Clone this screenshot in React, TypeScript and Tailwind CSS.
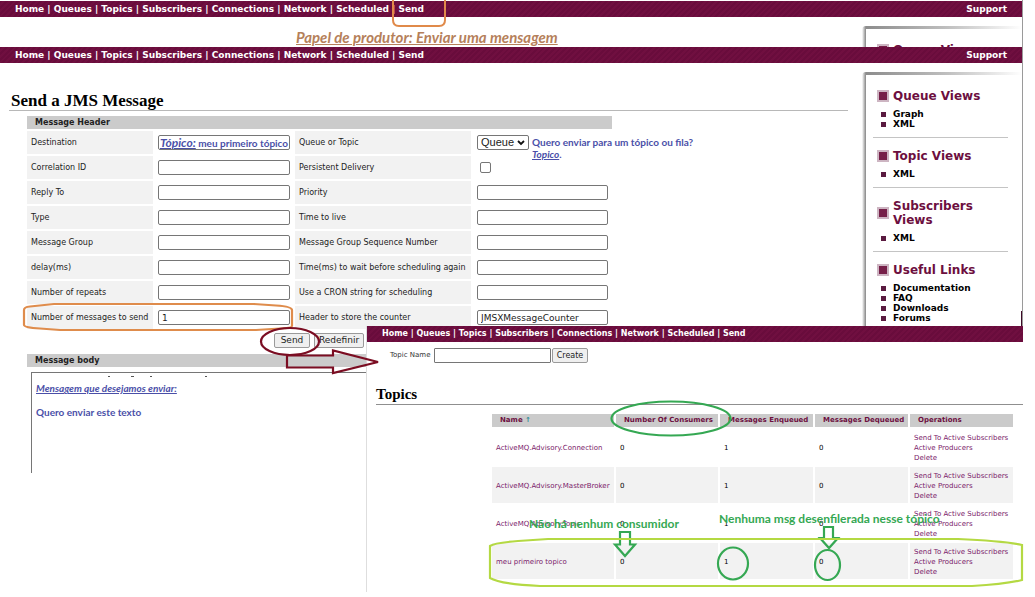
import React from "react";

const navItems = ["Home", "Queues", "Topics", "Subscribers", "Connections", "Network", "Scheduled", "Send"];

const stripes =
  "bg-[#6d0f3f] bg-[repeating-linear-gradient(135deg,#690c3c_0px,#690c3c_2px,#700f40_2px,#700f40_4px)]";

function NavBar({ small = false, support = true }: { small?: boolean; support?: boolean }) {
  return (
    <nav
      className={`flex h-4 shrink-0 items-center justify-between pl-[15px] font-bold text-white ${stripes} ${
        small ? "text-[8px]" : "pr-[15px] text-[9px]"
      }`}
    >
      <div className="whitespace-pre leading-4">
        {navItems.map((item, i) => (
          <React.Fragment key={item}>
            {i > 0 && " | "}
            <a href="#">{item}</a>
          </React.Fragment>
        ))}
      </div>
      {support && (
        <a href="#" className="leading-4">
          Support
        </a>
      )}
    </nav>
  );
}

const views = [
  { title: "Queue Views", links: ["Graph", "XML"] },
  { title: "Topic Views", links: ["XML"] },
  { title: "Subscribers Views", links: ["XML"] },
  { title: "Useful Links", links: ["Documentation", "FAQ", "Downloads", "Forums"] },
];

function Sidebar({ sections }: { sections: typeof views }) {
  return (
    <div className="flex w-[160px] shrink-0">
      <div className="w-[4px] rounded-tl-md bg-linear-to-r from-white to-[#858585]" />
      <aside className="min-w-0 flex-1">
        <div className="h-[3px] bg-linear-to-r from-[#8d8d8d] via-[#bdbdbd] to-white" />
        <div className="rounded-tl-sm bg-white pl-[7px] pr-[14px] pt-[11px]">
          {sections.map((s, i) => (
            <section
              key={s.title}
              className={`pl-1 pt-[3px] ${i < sections.length - 1 ? "mb-2 border-b border-[#c4c4c4] pb-2" : ""}`}
            >
              <h2 className="flex items-center gap-1 text-[12px] font-bold leading-[14px] text-[#6d0f3f]">
                <span className="size-3 shrink-0 border-2 border-[#cdb5c2] bg-[#762049]" />
                {s.title}
              </h2>
              <ul className="mt-[6px] pl-1 text-[9px] font-bold leading-[10px] text-black">
                {s.links.map((l) => (
                  <li key={l} className="flex items-center gap-[7px]">
                    <span className="size-[5px] bg-[#5a1a40]" />
                    <a href="#">{l}</a>
                  </li>
                ))}
              </ul>
            </section>
          ))}
        </div>
      </aside>
    </div>
  );
}

const leftFields = ["Destination", "Correlation ID", "Reply To", "Type", "Message Group", "delay(ms)", "Number of repeats", "Number of messages to send"];
const rightFields = [
  "Queue or Topic",
  "Persistent Delivery",
  "Priority",
  "Time to live",
  "Message Group Sequence Number",
  "Time(ms) to wait before scheduling again",
  "Use a CRON string for scheduling",
  "Header to store the counter",
];

const field = "block h-[15px] rounded-[2px] border border-[#767676] bg-white px-[3px] text-[9px] text-[#222]";
const note = "font-[Lato,sans-serif] font-bold text-[#4a4fa8]";
const button = "h-[15px] rounded-[2px] border border-[#9a9a9a] bg-[#efefef] leading-[13px] text-[#222]";

function RightControl({ row }: { row: number }) {
  const id = `right-${row}`;
  if (row === 0)
    return (
      <div className="relative">
        <select
          id={id}
          className="block h-[15px] w-[52px] appearance-none rounded-[2px] border border-[#767676] bg-white pl-[3px] font-['Liberation_Sans',sans-serif] text-[11px] leading-[13px] text-[#222]"
        >
          <option>Queue</option>
          <option>Topic</option>
        </select>
        <svg className="pointer-events-none absolute left-[40px] top-[5px]" width="8" height="6" viewBox="0 0 8 6">
          <path d="M1 1l3 3 3-3" fill="none" stroke="#111" strokeWidth="1.8" />
        </svg>
        <p className={`absolute left-[55px] top-px w-44 text-[10px] leading-3 ${note}`}>
          Quero enviar para um tópico ou fila?
          <br />
          <em className="underline">Topico</em>.
        </p>
      </div>
    );
  if (row === 1)
    return <input id={id} type="checkbox" className="ml-[3px] block size-[11px] appearance-none rounded-[2px] border border-[#767676]" />;
  return <input id={id} className={`${field} w-[131px]`} defaultValue={row === 7 ? "JMSXMessageCounter" : ""} />;
}

function MessageForm() {
  return (
    <form className="pl-[27px]" onSubmit={(e) => e.preventDefault()}>
      <h2 className="h-[13px] w-[585px] bg-[#cbcbcb] pl-2 text-[8px] font-bold leading-[13px] text-[#222]">Message Header</h2>
      <div className="mt-[2px] grid grid-cols-[126px_138px_176px_140px] gap-[2px] text-[8px] text-[#222]">
        {leftFields.map((label, i) => (
          <React.Fragment key={label}>
            <label htmlFor={`left-${i}`} className="flex h-[23px] items-center whitespace-nowrap bg-[#f2f2f2] pl-1">
              {label}
            </label>
            <div className="flex items-center pl-[3px]">
              {i === 0 ? (
                <div className="relative">
                  <input id="left-0" className={`${field} w-[132px]`} />
                  <span className={`pointer-events-none absolute left-[2px] top-0 whitespace-nowrap text-[10px] leading-4 ${note}`}>
                    <em className="text-[12px] underline">Tópico:</em> meu primeiro tópico
                  </span>
                </div>
              ) : (
                <input id={`left-${i}`} className={`${field} w-[132px]`} defaultValue={i === 7 ? "1" : ""} />
              )}
            </div>
            <label htmlFor={`right-${i}`} className="flex h-[23px] items-center whitespace-nowrap bg-[#f2f2f2] pl-1">
              {rightFields[i]}
            </label>
            <div className="flex items-center pl-1">
              <RightControl row={i} />
            </div>
          </React.Fragment>
        ))}
      </div>
      <div className="flex gap-1 pl-[247px] pt-1">
        <button className={`${button} w-9 text-[9px]`}>Send</button>
        <button type="reset" className={`${button} w-[50px] text-[9px]`}>
          Redefinir
        </button>
      </div>
      <h2 className="mt-[6px] h-[13px] w-[585px] bg-[#cbcbcb] pl-2 text-[8px] font-bold leading-[13px] text-[#222]">
        <label htmlFor="body">Message body</label>
      </h2>
      <div className="relative ml-1 mt-[5px] w-[581px]">
        <textarea id="body" className="block h-[101px] w-full resize-none border-l border-t border-[#767676]" />
        <div className={`pointer-events-none absolute left-[5px] top-2 text-[10px] leading-4 ${note}`}>
          <p>
            <em className="underline">Mensagem que desejamos enviar:</em>
          </p>
          <p className="mt-2">Quero enviar este texto</p>
        </div>
      </div>
    </form>
  );
}

const topicNames = ["ActiveMQ.Advisory.Connection", "ActiveMQ.Advisory.MasterBroker", "ActiveMQ.Advisory.Topic", "meu primeiro topico"];
const columns = ["Name", "Number Of Consumers", "Messages Enqueued", "Messages Dequeued", "Operations"];

function TopicsWindow() {
  return (
    <div className="absolute left-[366px] right-3 top-[326px] h-[266px] border-l border-[#dedede] bg-white">
      <NavBar small support={false} />
      <form className="flex h-[26px] items-center pl-[23px]" onSubmit={(e) => e.preventDefault()}>
        <label htmlFor="topic" className="w-11 text-[7px] text-[#333]">
          Topic Name
        </label>
        <input id="topic" className="h-[15px] w-[117px] rounded-[1px] border border-[#767676] text-[9px]" />
        <button className={`${button} ml-px w-9 text-[8px]`}>Create</button>
      </form>
      <h1 className="ml-[9px] mt-4 border-b border-[#8f8f8f] font-['Liberation_Serif',serif] text-[15px] font-bold leading-5">
        Topics
      </h1>
      <table className="ml-[123px] mt-[7px] w-[525px] table-fixed border-separate border-spacing-[2px] text-left text-[7px]">
        <colgroup>
          <col className="w-[122px]" />
          <col className="w-[102px]" />
          <col className="w-[93px]" />
          <col className="w-[93px]" />
          <col />
        </colgroup>
        <thead>
          <tr className="h-[13px] text-[#6d0f3f]">
            {columns.map((h, i) => (
              <th key={h} className="whitespace-nowrap bg-[#cbcbcb] p-0 pl-2 font-bold leading-[13px]">
                {h}
                {i === 0 && <span className="text-[#2d8a96]"> ↑</span>}
              </th>
            ))}
          </tr>
        </thead>
        <tbody>
          {topicNames.map((name, i) => (
            <tr key={name} className={`h-9 ${i % 2 ? "bg-[#f2f2f2]" : ""}`}>
              <td className="whitespace-nowrap p-0 pl-1 pt-[2px] text-[#7a1a6a]">
                <a href="#">{name}</a>
              </td>
              <td className="p-0 pl-1 pt-[2px]">0</td>
              <td className="p-0 pl-1 pt-[2px]">1</td>
              <td className="p-0 pl-1 pt-[2px]">0</td>
              <td className="whitespace-nowrap p-0 pl-1 pt-[2px] leading-[10px] text-[#7a1a6a]">
                <a href="#" className="block">Send To Active Subscribers</a>
                <a href="#" className="block">Active Producers</a>
                <a href="#" className="block">Delete</a>
              </td>
            </tr>
          ))}
        </tbody>
      </table>
    </div>
  );
}

function Annotations() {
  return (
    <div className="pointer-events-none absolute left-0 top-0">
      <svg width="1035" height="597" viewBox="0 0 1035 597" fill="none">
        <path d="M393 0v20q0 6 6 6h40q6 0 6-6V0" stroke="#e08a4a" strokeWidth="2" />
        <path
          d="M24 310q0-3 6-3.500l24-2.500h200l22 1.500q16 1 16 4.500v16q0 2-12 2.500l-24 1.500H60l-20-1.500q-16-1-16-3.500z"
          stroke="#df8c4c"
          strokeWidth="2.200"
        />
        <ellipse cx="290" cy="341.500" rx="29" ry="13.500" stroke="#7b0d22" strokeWidth="2.200" />
        <path d="M287 355.500h46v-5l45 11.500-45 11v-5.500h-46z" stroke="#7b0d22" strokeWidth="2.200" />
        <ellipse cx="671" cy="418.500" rx="59.500" ry="17" stroke="#35a853" strokeWidth="2.200" />
        <ellipse cx="733" cy="563.500" rx="15" ry="16" stroke="#35a853" strokeWidth="2.200" />
        <ellipse cx="827.500" cy="565" rx="12.500" ry="15" stroke="#35a853" strokeWidth="2.200" />
        <path d="M620 532h10v12.500h5L625 556l-10-11.500h5z" stroke="#35a853" strokeWidth="2.200" />
        <path d="M824 527h9v11h5l-9 10-9-10h4z" stroke="#35a853" strokeWidth="2.200" />
        <path
          d="M490 546q4-3 28-5l30-2h410q46 2 64 6v35q-16 4-50 6H540q-40-2-50-8z"
          stroke="#b4d943"
          strokeWidth="2.200"
        />
        <path d="M108 376.500h2M131 376.500h3M150 376.500h2M205 376.500h2" stroke="#555" />
        <path d="M1021.500 311v15" stroke="#3d0a26" strokeWidth="1" />
      </svg>
      <span className="absolute left-[529px] top-[516px] whitespace-nowrap font-[Lato,sans-serif] text-[12px] font-bold leading-4 text-[#35a853]">
        Não há nenhum consumidor
      </span>
      <span className="absolute left-[719px] top-[511px] whitespace-nowrap font-[Lato,sans-serif] text-[12px] font-bold leading-4 text-[#35a853]">
        Nenhuma msg desenfilerada nesse tópico
      </span>
    </div>
  );
}

export default function App() {
  return (
    <div className="relative min-h-screen overflow-hidden bg-white font-['DejaVu_Sans',sans-serif] text-black">
      <div className="mr-3 border-r border-[#9a9a9a] pt-px">
        <NavBar />
        <div className="flex h-[30px] overflow-hidden">
          <p className="flex-1 pl-[296px] pt-3 font-[Lato,sans-serif] text-[15px] font-bold italic leading-4 text-[#b5805a] underline">
            Papel de produtor: Enviar uma mensagem
          </p>
          <div className="mt-[9px] flex">
            <Sidebar sections={views.slice(0, 1)} />
          </div>
        </div>
        <NavBar />
        <div className="flex h-[263px]">
          <main className="min-w-0 flex-1">
            <h1 className="mb-[5px] ml-[9px] mr-[14px] mt-7 border-b border-[#b8b8b8] pl-[2px] font-['Liberation_Serif',serif] text-[17px] font-bold leading-[19px]">
              Send a JMS Message
            </h1>
            <MessageForm />
          </main>
          <div className="flex pt-[9px]">
            <Sidebar sections={views} />
          </div>
        </div>
      </div>
      <TopicsWindow />
      <Annotations />
    </div>
  );
}
